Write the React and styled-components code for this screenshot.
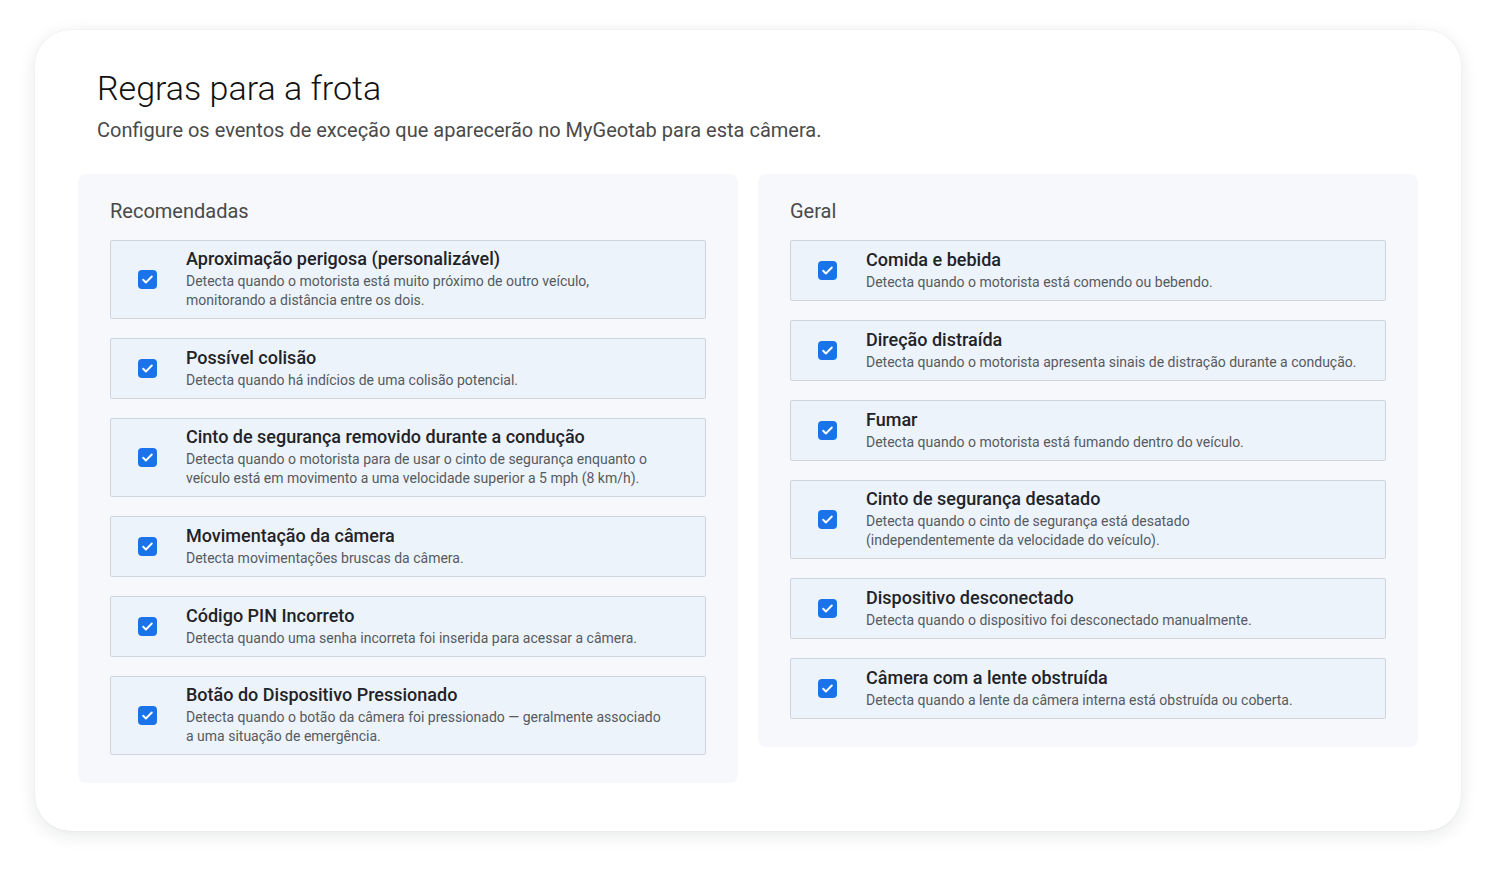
import React from "react";
import styled, { createGlobalStyle } from "styled-components";

const Global = createGlobalStyle`
  body { margin:0; background:#fff; font-family: Roboto, "Noto Sans", sans-serif; }
`;
const Page = styled.div`padding:30px 35px 49px;`;
const Card = styled.div`
  background:#fff; border-radius:36px; height:801px; box-sizing:border-box;
  box-shadow:0 4px 18px rgba(20,30,50,0.10), 0 0 3px rgba(20,30,50,0.05);
  padding:38px 43px 0 43px;
`;
const Title = styled.h1`margin:0 0 0 19px; font-weight:300; font-size:34px; color:#111; line-height:40px;`;
const Sub = styled.p`margin:9px 0 0 19px; font-size:20px; color:#4a4a4a; line-height:26px;`;
const Columns = styled.div`display:grid; grid-template-columns:660px 660px; gap:20px; margin-top:31px; align-items:start;`;
const Panel = styled.section`background:#f6f8fc; border-radius:8px; padding:23px 32px 28px;`;
const PanelTitle = styled.h2`margin:0 0 15px; font-size:20px; font-weight:400; color:#4a4a4a; line-height:28px;`;
const List = styled.div`display:flex; flex-direction:column; gap:19px;`;
const Item = styled.label`
  display:flex; align-items:center; background:#edf3fb; border:1px solid #cfd5dd; border-radius:2px;
  padding:7px 12px 8px 27px; min-height:44px;
`;
const Box = styled.span`
  width:19px; height:19px; border-radius:4px; background:#1a73e8; flex:none;
  display:flex; align-items:center; justify-content:center; margin-right:29px;
`;
const Text = styled.div`display:flex; flex-direction:column;`;
const ItemTitle = styled.div`font-size:18px; font-weight:500; color:#1f2328; line-height:22px; margin-bottom:2px;`;
const Desc = styled.div`font-size:14px; color:#555a60; line-height:19px;`;

const Check = () => (
  <Box><svg width="13" height="13" viewBox="0 0 24 24" fill="none" stroke="#fff" strokeWidth="3.5" strokeLinecap="round" strokeLinejoin="round"><path d="M4 12.5l5 5L20 6.5"/></svg></Box>
);

const rec = [
  ["Aproximação perigosa (personalizável)", ["Detecta quando o motorista está muito próximo de outro veículo,", "monitorando a distância entre os dois."]],
  ["Possível colisão", ["Detecta quando há indícios de uma colisão potencial."]],
  ["Cinto de segurança removido durante a condução", ["Detecta quando o motorista para de usar o cinto de segurança enquanto o", "veículo está em movimento a uma velocidade superior a 5 mph (8 km/h)."]],
  ["Movimentação da câmera", ["Detecta movimentações bruscas da câmera."]],
  ["Código PIN Incorreto", ["Detecta quando uma senha incorreta foi inserida para acessar a câmera."]],
  ["Botão do Dispositivo Pressionado", ["Detecta quando o botão da câmera foi pressionado — geralmente associado", "a uma situação de emergência."]],
];
const ger = [
  ["Comida e bebida", ["Detecta quando o motorista está comendo ou bebendo."]],
  ["Direção distraída", ["Detecta quando o motorista apresenta sinais de distração durante a condução."]],
  ["Fumar", ["Detecta quando o motorista está fumando dentro do veículo."]],
  ["Cinto de segurança desatado", ["Detecta quando o cinto de segurança está desatado", "(independentemente da velocidade do veículo)."]],
  ["Dispositivo desconectado", ["Detecta quando o dispositivo foi desconectado manualmente."]],
  ["Câmera com a lente obstruída", ["Detecta quando a lente da câmera interna está obstruída ou coberta."]],
];

const Section = ({ title, items }) => (
  <Panel>
    <PanelTitle>{title}</PanelTitle>
    <List>
      {items.map(([t, d]) => (
        <Item key={t}>
          <Check />
          <Text>
            <ItemTitle>{t}</ItemTitle>
            {d.map((l) => <Desc key={l}>{l}</Desc>)}
          </Text>
        </Item>
      ))}
    </List>
  </Panel>
);

export default function App() {
  return (
    <Page>
      <Global />
      <Card>
        <Title>Regras para a frota</Title>
        <Sub>Configure os eventos de exceção que aparecerão no MyGeotab para esta câmera.</Sub>
        <Columns>
          <Section title="Recomendadas" items={rec} />
          <Section title="Geral" items={ger} />
        </Columns>
      </Card>
    </Page>
  );
}
